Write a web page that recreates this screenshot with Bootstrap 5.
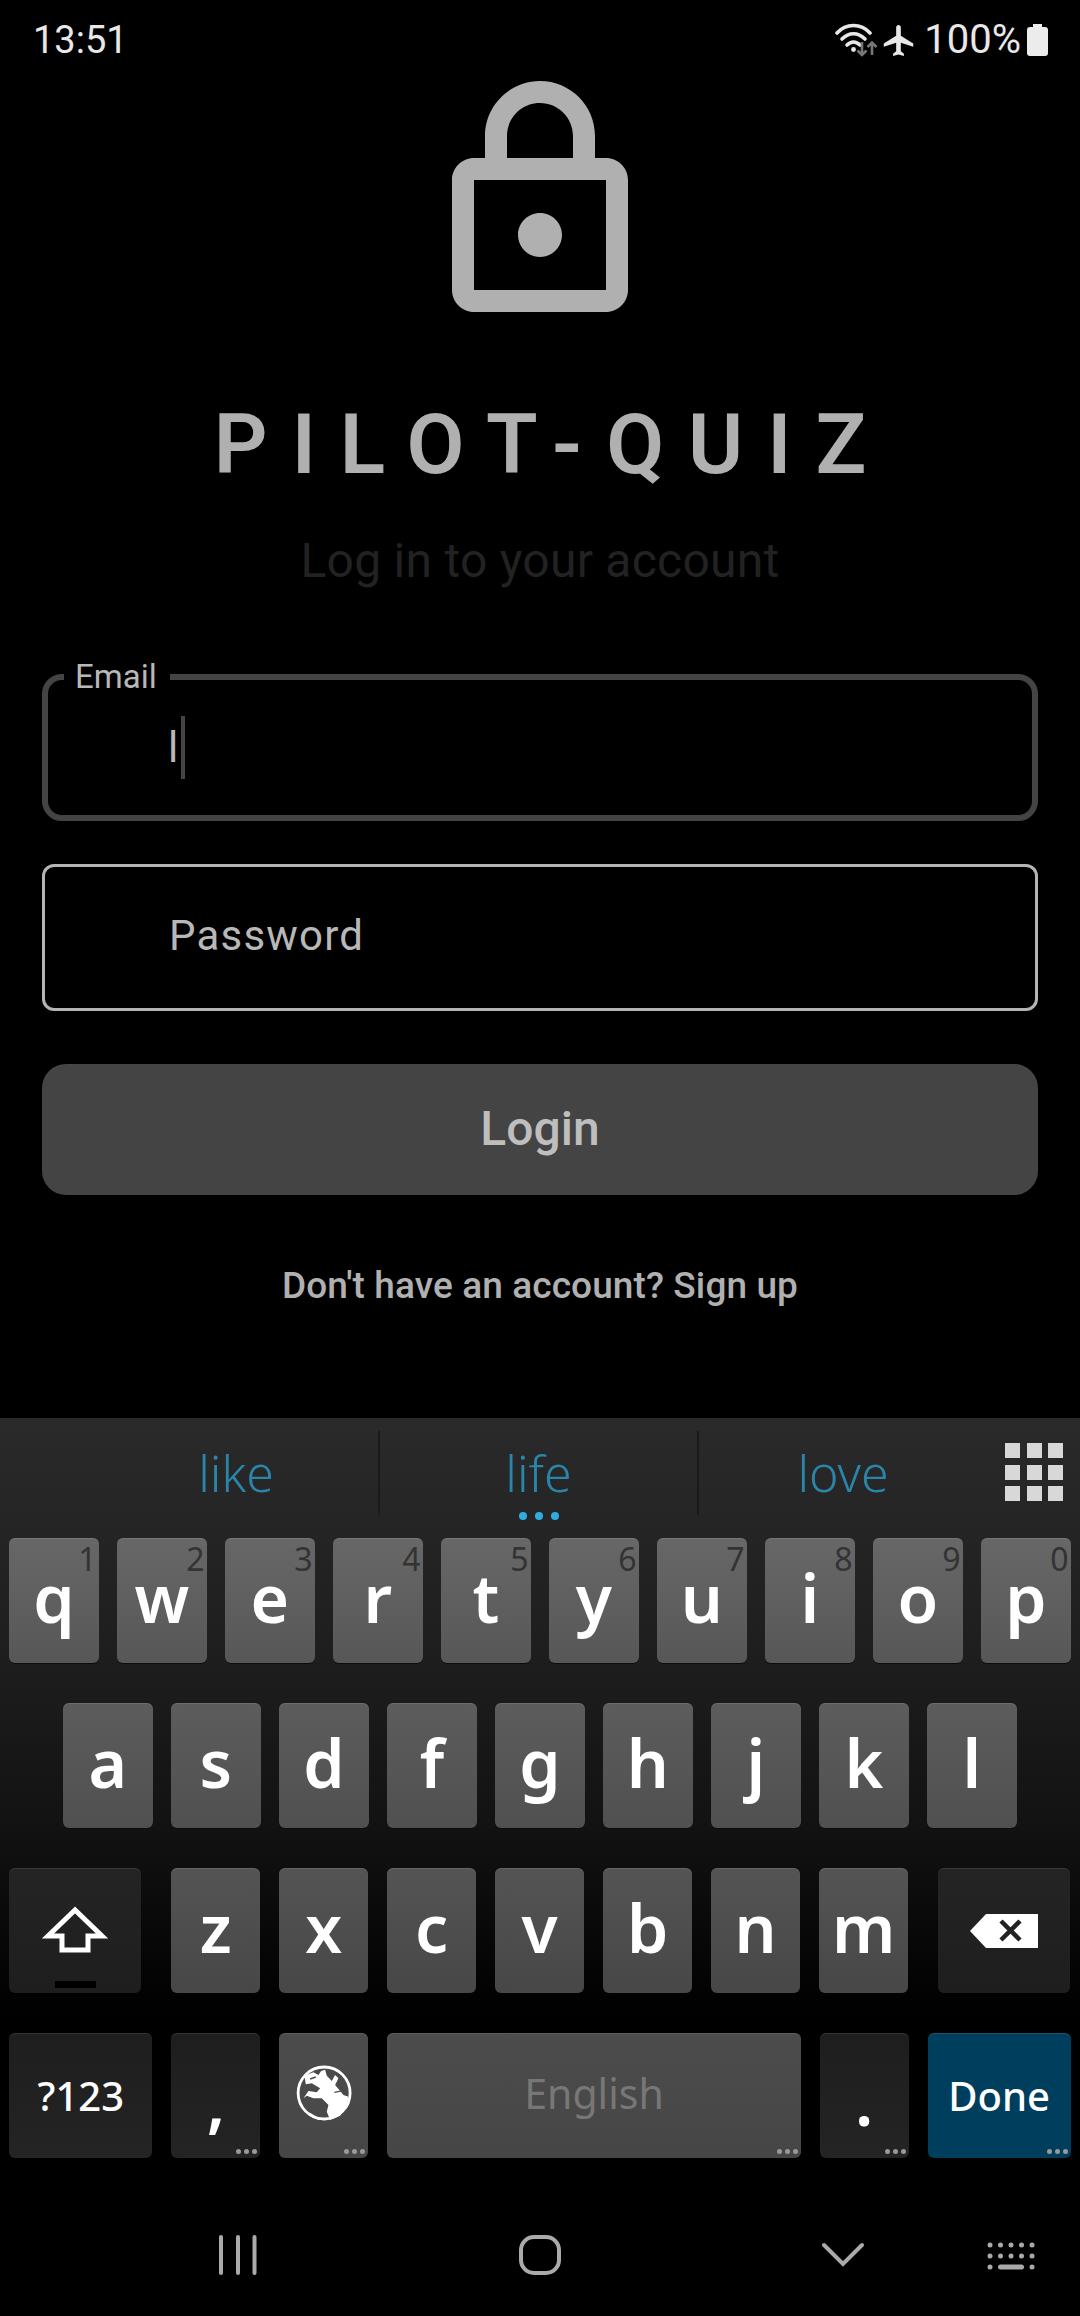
<!DOCTYPE html>
<html lang="en">
<head>
    <meta charset="UTF-8">
    <meta name="viewport" content="width=device-width, initial-scale=1.0">
    <title>Pilot Quiz Login</title>
    <link rel="stylesheet" href="https://cdn.jsdelivr.net/npm/bootstrap@5.3.0/dist/css/bootstrap.min.css">
    <style>
        body {
            width: 1080px;
            height: 2316px;
            background-color: #000;
            font-family: Roboto, "Liberation Sans", sans-serif;
            overflow: hidden;
        }
        .status-bar {
            height: 70px;
            padding: 0 32px 0 33px;
            color: #e8e8e8;
            font-size: 38px;
            line-height: 80px;
        }
        .status-icons { height: 70px; }
        .status-pct { margin: 0 6px 0 10px; font-size: 40px; letter-spacing: 0; }
        .plane-icon { margin-top: 25px; }
        .login-area { padding: 0 42px; }
        .lock-icon { width: 264px; height: 264px; fill: #b0b0b0; }
        .app-title {
            margin: 62px 0 0;
            padding-left: 24px;
            font-size: 84px;
            line-height: 98px;
            font-weight: 600;
            letter-spacing: 24px;
            color: #b0b0b0;
        }
        .app-sub {
            margin: 39px 0 0;
            font-size: 48px;
            line-height: 56px;
            letter-spacing: .25px;
            color: #222;
        }
        .email-wrap { margin-top: 85px; }
        .field-wrap { position: relative; }
        .field-input.form-control {
            height: 147px;
            padding: 0 0 4px 124px;
            background: #000;
            border: 3px solid #b4b4b4;
            border-radius: 12px;
            color: #b8b8b8;
            font-size: 42px;
            letter-spacing: 1.2px;
            box-shadow: none;
        }
        .field-input.form-control::placeholder { color: #b8b8b8; opacity: 1; }
        .field-active.form-control { border: 6px solid #444; border-radius: 20px; padding: 0 0 0 120px; }
        .field-notch {
            position: absolute;
            left: 22px;
            top: -18px;
            padding: 0 13px 0 11px;
            background: #000;
            color: #b8b8b8;
            font-size: 33px;
            line-height: 42px;
        }
        .field-caret {
            position: absolute;
            left: 139px;
            top: 42px;
            width: 4px;
            height: 63px;
            background: #444;
        }
        .pass-wrap { margin-top: 43px; }
        .login-btn.btn {
            display: block;
            width: 100%;
            height: 131px;
            margin-top: 53px;
            padding-bottom: 8px;
            background: #444;
            border: 0;
            border-radius: 24px;
            color: #bebebe;
            font-size: 48px;
            font-weight: 500;
        }
        .signup-line {
            margin: 70px 0 0;
            font-size: 37px;
            line-height: 42px;
            font-weight: 500;
            letter-spacing: .1px;
            color: #b0b0b0;
        }
        .keyboard {
            height: 762px;
            background: linear-gradient(#2a2a2a 0, #1f1f1f 220px, #121212 410px, #000 600px);
            font-family: "Noto Sans", "Open Sans", sans-serif;
        }
        .cand-bar { height: 120px; padding-top: 13px; position: relative; }
        .cand-word {
            height: 84px;
            color: #2a85ab;
            font-size: 50px;
            font-weight: 300;
            line-height: 84px;
            text-align: center;
        }
        .cand-a { width: 378px; padding-left: 94px; }
        .cand-b { width: 321px; border-left: 2px solid #1a1a1a; border-right: 2px solid #1a1a1a; position: relative; }
        .cand-c { width: 294px; padding-right: 6px; margin-right: 12px; }
        .cand-dots {
            position: absolute;
            left: 0;
            right: 0;
            top: 81px;
            gap: 8px;
        }
        .cand-dots span { width: 8px; height: 8px; border-radius: 50%; background: #2eaee0; }
        .apps-grid {
            width: 56px;
            height: 56px;
            margin-top: 12px;
            display: grid;
            grid-template-columns: repeat(3, 15px);
            grid-template-rows: repeat(3, 15px);
            gap: 6.5px;
        }
        .apps-grid span { background: #d8d8d8; }
        .key-rows { gap: 40px; padding: 0 9.25px; }
        .key-row { gap: 18.75px; height: 125px; }
        .kb-key {
            position: relative;
            width: 89.25px;
            height: 125px;
            border-radius: 6px;
            color: #fff;
            font-size: 66px;
            font-weight: 600;
            line-height: 118px;
            text-align: center;
            box-shadow: inset 0 1px 0 rgba(255, 255, 255, .1), 0 1px 0 rgba(0, 0, 0, .5);
        }
        .row-1 .kb-key { background: linear-gradient(#676767, #575757); }
        .row-2 .kb-key { background: linear-gradient(#5c5c5c, #505050); }
        .row-3 .kb-key { background: linear-gradient(#545454, #474747); }
        .row-4 .kb-key { background: linear-gradient(#4c4c4c, #464646); }
        .key-row .key-dark { background: linear-gradient(#242424, #1e1e1e); }
        .row-4 .key-dark { background: linear-gradient(#1e1e1e, #242424); }
        .key-row .key-done { background: #003e5e; width: 143.25px; font-size: 40px; font-weight: 500; line-height: 126px; }
        .key-tall { margin-left: 54px; }
        .key-shift { width: 132px; margin-right: 11px; }
        .key-del { width: 132px; margin-left: 11px; }
        .key-sym { width: 143.25px; font-size: 40px; font-weight: 500; line-height: 126px; }
        .key-space { width: 413.75px; color: #777; font-size: 41px; font-weight: 400; line-height: 120px; }
        .key-punct { line-height: 134px; }
        .key-num {
            position: absolute;
            top: 1px;
            right: 2px;
            color: #333;
            font-size: 32px;
            font-weight: 400;
            line-height: 40px;
        }
        .key-more {
            position: absolute;
            right: 3px;
            bottom: 4px;
            gap: 3px;
        }
        .key-more span { width: 5px; height: 5px; border-radius: 50%; background: #9a9a9a; }
        .key-icon { position: absolute; left: 0; top: 0; width: 100%; height: 100%; }
        .nav-bar { height: 136px; position: relative; }
        .nav-icons { width: 100%; height: 100%; }
    </style>
</head>
<body class="d-flex flex-column">
    <div class="status-bar d-flex justify-content-between flex-shrink-0">
        <div>13:51</div>
        <div class="status-icons d-flex">
            <svg width="48" height="70" viewBox="0 0 48 70">
                <g fill="none" stroke="#e8e8e8" stroke-width="3.6" stroke-linecap="round">
                    <path d="M2 33C11 23 26 23 35 33"/>
                    <path d="M7 39C14 32 23 32 30 39"/>
                    <path d="M12 45C16 41 21 41 25 45"/>
                </g>
                <circle cx="18.5" cy="49.5" r="2.4" fill="#e8e8e8"/>
                <g fill="none" stroke="#777" stroke-width="2.6">
                    <path d="M27 42V55M22.5 50.5L27 55L31.5 50.5"/>
                    <path d="M37 55V43M32.5 47L37 42.5L41.5 47"/>
                </g>
            </svg>
            <svg class="plane-icon" width="31" height="31" viewBox="2 2 19 20">
                <path fill="#e8e8e8" d="M21 16v-2l-8-5V3.500c0-.83-.67-1.500-1.500-1.500S10 2.670 10 3.500V9l-8 5v2l8-2.500V19l-2 1.500V22l3.500-1 3.500 1v-1.500L13 19v-5.500l8 2.500z"/>
            </svg>
            <span class="status-pct">100%</span>
            <svg width="21" height="70" viewBox="0 0 21 70">
                <path fill="#ececec" d="M6 24h9v3h3a3 3 0 0 1 3 3v23a3 3 0 0 1-3 3H3a3 3 0 0 1-3-3V30a3 3 0 0 1 3-3h3z"/>
            </svg>
        </div>
    </div>

    <main class="login-area flex-grow-1 text-center">
        <svg class="lock-icon d-block mx-auto" viewBox="0 0 24 24">
            <path d="M18 8h-1V6c0-2.76-2.24-5-5-5S7 3.24 7 6v2H6c-1.1 0-2 .9-2 2v10c0 1.1.9 2 2 2h12c1.1 0 2-.9 2-2V10c0-1.1-.9-2-2-2zM9 6c0-1.66 1.34-3 3-3s3 1.34 3 3v2H9V6zm9 14H6V10h12v10zm-6-3c1.1 0 2-.9 2-2s-.9-2-2-2-2 .9-2 2 .9 2 2 2z"/>
        </svg>
        <h1 class="app-title">PILOT-QUIZ</h1>
        <p class="app-sub">Log in to your account</p>

        <div class="field-wrap email-wrap">
            <input class="form-control field-input field-active" type="text" value="l" aria-label="Email">
            <label class="field-notch">Email</label>
            <span class="field-caret"></span>
        </div>
        <div class="field-wrap pass-wrap">
            <input class="form-control field-input" type="text" placeholder="Password" aria-label="Password">
        </div>
        <button class="btn login-btn" type="button">Login</button>
        <p class="signup-line">Don't have an account? Sign up</p>
    </main>

    <section class="keyboard flex-shrink-0">
        <div class="cand-bar d-flex">
            <div class="cand-word cand-a">like</div>
            <div class="cand-word cand-b">life
                <div class="cand-dots d-flex justify-content-center"><span></span><span></span><span></span></div>
            </div>
            <div class="cand-word cand-c">love</div>
            <div class="apps-grid">
                <span></span><span></span><span></span><span></span><span></span><span></span><span></span><span></span><span></span>
            </div>
        </div>
        <div class="key-rows d-flex flex-column">
            <div class="key-row row-1 d-flex">
                <div class="kb-key">q<span class="key-num">1</span></div>
                <div class="kb-key">w<span class="key-num">2</span></div>
                <div class="kb-key">e<span class="key-num">3</span></div>
                <div class="kb-key">r<span class="key-num">4</span></div>
                <div class="kb-key">t<span class="key-num">5</span></div>
                <div class="kb-key">y<span class="key-num">6</span></div>
                <div class="kb-key">u<span class="key-num">7</span></div>
                <div class="kb-key">i<span class="key-num">8</span></div>
                <div class="kb-key">o<span class="key-num">9</span></div>
                <div class="kb-key">p<span class="key-num">0</span></div>
            </div>
            <div class="key-row row-2 d-flex">
                <div class="kb-key key-tall">a</div>
                <div class="kb-key">s</div>
                <div class="kb-key">d</div>
                <div class="kb-key">f</div>
                <div class="kb-key">g</div>
                <div class="kb-key">h</div>
                <div class="kb-key">j</div>
                <div class="kb-key">k</div>
                <div class="kb-key">l</div>
            </div>
            <div class="key-row row-3 d-flex">
                <div class="kb-key key-dark key-shift">
                    <svg class="key-icon" viewBox="0 0 132 125">
                        <path d="M66 42L39 68H53V82H79V68H93Z" fill="none" stroke="#fff" stroke-width="5"/>
                        <rect x="46" y="113" width="41" height="7" fill="#000"/>
                    </svg>
                </div>
                <div class="kb-key">z</div>
                <div class="kb-key">x</div>
                <div class="kb-key">c</div>
                <div class="kb-key">v</div>
                <div class="kb-key">b</div>
                <div class="kb-key">n</div>
                <div class="kb-key">m</div>
                <div class="kb-key key-dark key-del">
                    <svg class="key-icon" viewBox="0 0 132 125">
                        <path d="M32 63L48 46H100V80H48Z" fill="#fff"/>
                        <path d="M63 53L82 72M82 53L63 72" stroke="#222" stroke-width="4.5"/>
                    </svg>
                </div>
            </div>
            <div class="key-row row-4 d-flex">
                <div class="kb-key key-dark key-sym">?123</div>
                <div class="kb-key key-dark key-punct">,<span class="key-more d-flex"><span></span><span></span><span></span></span></div>
                <div class="kb-key">
                    <svg class="key-icon" viewBox="0 0 89 125">
                        <circle cx="45" cy="60" r="26" fill="#4a4a4a" stroke="#fff" stroke-width="2.800"/>
                        <g transform="translate(6 22) scale(.3333)">
                            <path fill="#fff" d="M58 62L85 52L100 60L108 48L120 44L125 62L140 78L150 60L160 70L150 90L175 120L190 125L185 155L165 182L135 195L125 170L130 150L110 130L85 130L65 122L55 130L70 108L95 112L105 100L80 85L62 88Z"/>
                            <path fill="#fff" d="M72 172L95 185L125 192L100 195L82 188Z"/>
                            <path fill="none" stroke="#4a4a4a" stroke-width="4" d="M148 112L178 106M75 72L92 66"/>
                        </g>
                    </svg>
                    <span class="key-more d-flex"><span></span><span></span><span></span></span>
                </div>
                <div class="kb-key key-space">English<span class="key-more d-flex"><span></span><span></span><span></span></span></div>
                <div class="kb-key key-dark key-punct">.<span class="key-more d-flex"><span></span><span></span><span></span></span></div>
                <div class="kb-key key-done">Done<span class="key-more d-flex"><span></span><span></span><span></span></span></div>
            </div>
        </div>
    </section>

    <nav class="nav-bar flex-shrink-0">
        <svg class="nav-icons d-block" viewBox="0 0 1080 136">
            <g fill="none" stroke="#aaa" stroke-width="4" stroke-linecap="round">
                <path d="M221 57V93M238 57V93M254.500 57V93"/>
                <rect x="521" y="57" width="38" height="36" rx="13"/>
                <path d="M824 65L843 84L862 65"/>
            </g>
            <g fill="#aaa">
                <circle cx="990" cy="65" r="2.500"/><circle cx="1000.500" cy="65" r="2.500"/><circle cx="1011" cy="65" r="2.500"/><circle cx="1021.500" cy="65" r="2.500"/><circle cx="1032" cy="65" r="2.500"/>
                <circle cx="990" cy="76" r="2.500"/><circle cx="1000.500" cy="76" r="2.500"/><circle cx="1011" cy="76" r="2.500"/><circle cx="1021.500" cy="76" r="2.500"/><circle cx="1032" cy="76" r="2.500"/>
                <circle cx="990" cy="87" r="2.500"/><rect x="998" y="84.500" width="26" height="5" rx="2.500"/><circle cx="1032" cy="87" r="2.500"/>
            </g>
        </svg>
    </nav>
</body>
</html>
